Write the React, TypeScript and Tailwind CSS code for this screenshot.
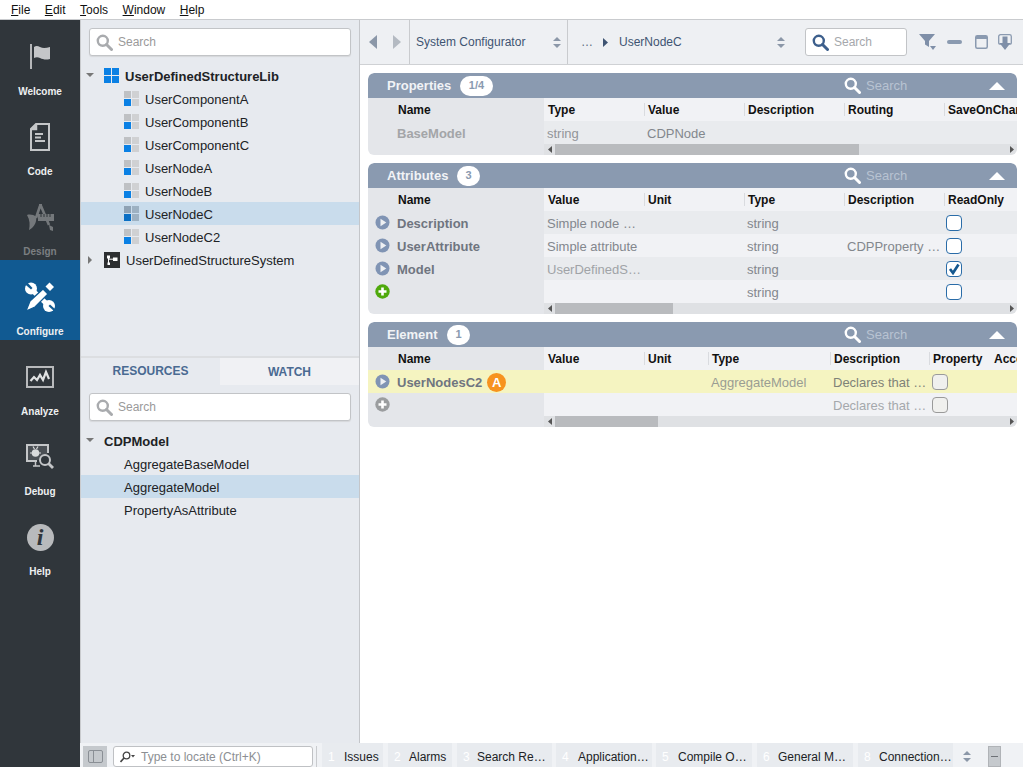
import React from "react";

const Mag = ({ c = "#a9abae", s = 17 }: { c?: string; s?: number }) => (
  <svg width={s} height={s} viewBox="0 0 17 17" className="shrink-0">
    <circle cx="6.8" cy="6.8" r="5" fill="none" stroke={c} strokeWidth="2.4" />
    <path d="M10.5 10.5L15.5 15.5" stroke={c} strokeWidth="3" strokeLinecap="round" />
  </svg>
);

const UpDown = ({ c = "#8b97a8" }: { c?: string }) => (
  <svg width="8" height="11" viewBox="0 0 8 11" className="shrink-0">
    <path d="M4 0L8 4H0z M0 7H8L4 11z" fill={c} />
  </svg>
);

const Tri = ({ dir, c = "#777" }: { dir: "down" | "right" | "left" | "up"; c?: string }) => {
  const p = { down: "M0 1H8L4 5z", right: "M2 0L6 4L2 8z", left: "M6 0L2 4L6 8z", up: "M0 5H8L4 1z" }[dir];
  return (
    <svg width="8" height="8" viewBox="0 0 8 8" className="shrink-0">
      <path d={p} fill={c} />
    </svg>
  );
};

const SearchBox = () => (
  <div className="mx-[8px] h-[28px] w-[262px] flex items-center gap-[5px] pl-[6px] bg-white border border-[#c2c4c7] rounded-[3px] shadow-[0_1px_1px_#d5d7da] text-[12px] text-[#9a9a9a]">
    <Mag />
    <span>Search</span>
  </div>
);

const NodeIcon = ({ sel }: { sel?: boolean }) => (
  <span className="grid grid-cols-2 gap-[1px] w-[15px] h-[15px] shrink-0">
    <span className={sel ? "bg-[#8fa2b4]" : "bg-[#bfc1c4]"} />
    <span className={sel ? "bg-[#9db1c2]" : "bg-[#d0d1d3]"} />
    <span className={sel ? "bg-[#0a6fc4]" : "bg-[#0a80e4]"} />
    <span className={sel ? "bg-[#9db1c2]" : "bg-[#cfd0d2]"} />
  </span>
);

const LibIcon = () => (
  <span className="grid grid-cols-2 gap-[1px] w-[15px] h-[15px] shrink-0">
    <span className="bg-[#0a80e4]" />
    <span className="bg-[#0a80e4]" />
    <span className="bg-[#0a80e4]" />
    <span className="bg-[#0a80e4]" />
  </span>
);

const SysIcon = () => (
  <svg width="16" height="16" viewBox="0 0 16 16" className="shrink-0">
    <rect width="16" height="16" fill="#2d2f31" />
    <rect x="3" y="3.5" width="3" height="3" fill="#fff" />
    <rect x="9" y="5.5" width="4.5" height="3.5" fill="#fff" />
    <rect x="3.5" y="10.5" width="2.5" height="2.5" fill="#fff" />
    <path d="M4.5 6V11M5 7.2H9" stroke="#fff" strokeWidth="1" />
  </svg>
);

const SideItem = ({
  label,
  children,
  active,
  dim,
}: {
  label: string;
  children: React.ReactNode;
  active?: boolean;
  dim?: boolean;
}) => (
  <div className={`h-[80px] flex flex-col items-center pt-[16px] ${active ? "bg-[#115a92]" : ""}`}>
    <div className="h-[42px] w-full flex items-center justify-center">{children}</div>
    <div className={`mt-[7px] text-[10px] leading-[14px] font-bold ${dim ? "text-[#7b7f82]" : "text-[#eef0f1]"}`}>{label}</div>
  </div>
);

const Sidebar = () => (
  <div className="w-[80px] shrink-0 bg-[#30363b] flex flex-col">
    <SideItem label="Welcome">
      <svg width="24" height="28" viewBox="0 0 24 28">
        <rect x="2" y="1" width="2" height="25" fill="#b5b7b9" />
        <path d="M6 4C8 2.500 10 3 12 4C15 5.500 18 5 22 4V16C18 17 15 16.500 12 15C10 14 8 14 6 15z" fill="#c4c6c8" />
      </svg>
    </SideItem>
    <SideItem label="Code">
      <svg width="20" height="28" viewBox="0 0 20 28">
        <path d="M6 1H19V27H1V6z" fill="none" stroke="#c4c6c8" strokeWidth="2" />
        <path d="M6.500 1V6.500H1" fill="#c4c6c8" stroke="#c4c6c8" strokeWidth="1.500" />
        <path d="M5 11H13M5 14.500H11M5 18H15" stroke="#c4c6c8" strokeWidth="1.800" />
      </svg>
    </SideItem>
    <SideItem label="Design" dim>
      <svg width="27" height="27" viewBox="0 0 27 27">
        <path d="M13 2L9 14M14 2L22 21" stroke="#74787b" strokeWidth="2.600" fill="none" />
        <path d="M12 0H15V4H12z" fill="#74787b" />
        <rect x="11" y="10" width="16" height="7" fill="#74787b" />
        <path d="M14 10V13M17 10V13M20 10V13M23 10V13" stroke="#30363b" strokeWidth="1" />
        <path d="M0 11C3 10 7 11 9 12.500C10 17 8 23 2 26C3 21 3 16 0 11z" fill="#74787b" />
        <path d="M22 21L26 23V27L23 26z" fill="#74787b" />
      </svg>
    </SideItem>
    <SideItem label="Configure" active>
      <svg width="30" height="30" viewBox="0 0 30 30">
        <path d="M6.500 7.500L24 24" stroke="#fff" strokeWidth="5" />
        <circle cx="6" cy="6.500" r="6" fill="#fff" />
        <path d="M1 -1L7.500 6L6 7.500L-1 1.500z" fill="#115a92" />
        <circle cx="24" cy="24" r="6" fill="#fff" />
        <path d="M30.500 30.500L23.500 24L25 22.500L31 28z" fill="#115a92" />
        <path d="M1 29L5 19L18 7L23 12L10 25z" fill="#fff" stroke="#115a92" strokeWidth="1.300" />
        <path d="M20.500 4.500L24.500 0.500L29 5L25 9z" fill="#fff" />
      </svg>
    </SideItem>
    <SideItem label="Analyze">
      <svg width="28" height="22" viewBox="0 0 28 22">
        <rect x="1" y="1" width="26" height="20" fill="#30363b" stroke="#b8babc" strokeWidth="2" />
        <path d="M4.500 15L8 11L11 14L14 9L17 14L20 6L23 13" fill="none" stroke="#e0e2e3" strokeWidth="2.200" />
      </svg>
    </SideItem>
    <SideItem label="Debug">
      <svg width="30" height="30" viewBox="0 0 30 30">
        <path d="M1 2H24V11H22V4H3V18H12V20H1z" fill="#c4c6c8" />
        <rect x="3" y="4" width="19" height="14" fill="#4b5055" />
        <path d="M8 24H15M10.500 20V24" stroke="#c4c6c8" strokeWidth="1.500" />
        <circle cx="10.500" cy="11" r="3.800" fill="#d8dadb" />
        <path d="M8 4.500L9.500 7M13 4.500L11.500 7M5 11H7M14 11H16" stroke="#d8dadb" strokeWidth="1.200" />
        <circle cx="20" cy="18" r="5" fill="#30363b" stroke="#c4c6c8" strokeWidth="2" />
        <path d="M23.500 21.500L28 26" stroke="#c4c6c8" strokeWidth="2.800" />
      </svg>
    </SideItem>
    <SideItem label="Help">
      <div className="w-[27px] h-[27px] rounded-full bg-[#b8babc] flex items-center justify-center font-['Liberation_Serif',serif] font-bold italic text-[24px] leading-none text-[#30363b]">
        i
      </div>
    </SideItem>
  </div>
);

const TreeRow = ({
  children,
  icon,
  sel,
  bold,
  indent,
}: {
  children: React.ReactNode;
  icon?: React.ReactNode;
  sel?: boolean;
  bold?: boolean;
  indent: string;
}) => (
  <div className={`h-[23px] flex items-center text-[13px] text-[#202225] ${indent} ${sel ? "bg-[#c9dcec]" : ""} ${bold ? "font-bold text-[#111]" : ""}`}>
    {icon}
    <span className="pt-[2px]">{children}</span>
  </div>
);

const LeftPanel = () => (
  <div className="w-[280px] shrink-0 bg-[#e7eaef] border-l border-[#c9cbce] border-r border-r-[#c4c6ca] flex flex-col">
    <div className="h-[338px] flex flex-col pt-[8px] border-b-2 border-[#dcdee1]">
      <SearchBox />
      <div className="mt-[8px]">
        <TreeRow
          bold
          indent="pl-[5px]"
          icon={
            <>
              <Tri dir="down" />
              <span className="ml-[10px] mr-[6px] flex">
                <LibIcon />
              </span>
            </>
          }
        >
          UserDefinedStructureLib
        </TreeRow>
        {["UserComponentA", "UserComponentB", "UserComponentC", "UserNodeA", "UserNodeB", "UserNodeC", "UserNodeC2"].map((n) => (
          <TreeRow
            key={n}
            indent="pl-[43px]"
            sel={n === "UserNodeC"}
            icon={
              <span className="mr-[6px] flex">
                <NodeIcon sel={n === "UserNodeC"} />
              </span>
            }
          >
            {n}
          </TreeRow>
        ))}
        <TreeRow
          indent="pl-[5px]"
          icon={
            <>
              <Tri dir="right" />
              <span className="ml-[10px] mr-[6px] flex">
                <SysIcon />
              </span>
            </>
          }
        >
          UserDefinedStructureSystem
        </TreeRow>
      </div>
    </div>
    <div className="flex-1 flex flex-col">
      <div className="h-[27px] flex text-[12px] font-bold text-[#4a6a92]">
        <div className="w-[139px] flex items-center justify-center pb-[2px]">RESOURCES</div>
        <div className="w-[139px] flex items-center justify-center bg-[#f0f1f4]">WATCH</div>
      </div>
      <div className="mt-[8px]">
        <SearchBox />
      </div>
      <div className="mt-[8px]">
        <TreeRow bold indent="pl-[5px]" icon={<Tri dir="down" />}>
          <span className="ml-[10px]">CDPModel</span>
        </TreeRow>
        <TreeRow indent="pl-[43px]">AggregateBaseModel</TreeRow>
        <TreeRow indent="pl-[43px]" sel>
          AggregateModel
        </TreeRow>
        <TreeRow indent="pl-[43px]">PropertyAsAttribute</TreeRow>
      </div>
    </div>
  </div>
);

const Toolbar = () => (
  <div className="h-[45px] shrink-0 bg-[#eef0f3] border-b border-[#cfd1d4] flex items-stretch text-[12px] text-[#3e5472]">
    <div className="w-[50px] flex items-center pl-[9px] gap-[16px] border-r border-[#c9cbce]">
      <svg width="8" height="14" viewBox="0 0 8 14"><path d="M8 0V14L0 7z" fill="#8b97a8" /></svg>
      <svg width="8" height="14" viewBox="0 0 8 14"><path d="M0 0V14L8 7z" fill="#b4bac2" /></svg>
    </div>
    <div className="w-[158px] flex items-center pl-[6px] border-r border-[#c9cbce]">
      <span className="w-[137px]">System Configurator</span>
      <UpDown />
    </div>
    <div className="w-[236px] flex items-center pl-[13px]">
      <span className="w-[22px] text-[#5b6b80]">…</span>
      <svg width="5" height="9" viewBox="0 0 5 9" className="mr-[11px]"><path d="M0 0V9L5 4.500z" fill="#3e5472" /></svg>
      <span className="w-[158px]">UserNodeC</span>
      <UpDown />
    </div>
    <div className="flex items-center">
      <div className="ml-[1px] w-[102px] h-[28px] bg-white border border-[#c2c4c7] rounded-[3px] flex items-center pl-[6px] gap-[5px] text-[#a5a8ac]">
        <Mag c="#3d5f8c" />
        <span>Search</span>
      </div>
      <svg width="17" height="17" viewBox="0 0 17 17" className="ml-[12px]">
        <path d="M0 0H16L10 7V13L6 10.500V7z" fill="#7f8fa8" />
        <path d="M11 12H17L14 16z" fill="#7f8fa8" />
      </svg>
      <span className="ml-[11px] w-[15px] h-[4px] rounded-[2px] bg-[#8a9ab0]" />
      <svg width="13" height="14" viewBox="0 0 13 14" className="ml-[13px]">
        <rect x="0.750" y="0.750" width="11.500" height="12.500" rx="1.500" fill="none" stroke="#8a9ab0" strokeWidth="1.500" />
        <rect x="1" y="1" width="11" height="3" fill="#8a9ab0" />
      </svg>
      <svg width="14" height="16" viewBox="0 0 14 16" className="ml-[10px]">
        <path d="M3 10H1.500C0.800 10 0.700 9.500 0.700 9V2.500C0.700 1.500 1.500 0.700 2.500 0.700H11.500C12.500 0.700 13.300 1.500 13.300 2.500V9C13.300 9.500 13.200 10 12.500 10H11" fill="none" stroke="#8a9ab0" strokeWidth="1.300" />
        <path d="M4.500 2.500H9.500V9H12.500L7 16L1.500 9H4.500z" fill="#7f8fa8" />
      </svg>
    </div>
  </div>
);

const Play = () => (
  <svg width="15" height="15" viewBox="0 0 15 15" className="shrink-0">
    <circle cx="7.500" cy="7.500" r="7" fill="#8094b4" />
    <path d="M5.500 3.800V11.200L11.300 7.500z" fill="#eef0f3" />
  </svg>
);

const Plus = ({ c }: { c: string }) => (
  <svg width="15" height="15" viewBox="0 0 15 15" className="shrink-0">
    <circle cx="7.500" cy="7.500" r="7.200" fill={c} />
    <path d="M7.500 3.500V11.500M3.500 7.500H11.500" stroke="#fff" strokeWidth="2.600" />
  </svg>
);

const Check = ({ on, gray }: { on?: boolean; gray?: boolean }) => (
  <span className={`mt-[1px] w-[16px] h-[16px] flex items-center justify-center rounded-[4px] border ${gray ? "border-[#9a9a9a] bg-[#f0f0ee]" : "-ml-[1px] border-[#2a6ca8] bg-white"}`}>
    {on && (
      <svg width="12" height="12" viewBox="0 0 12 12">
        <path d="M2 6L5 10L10.500 1.500" fill="none" stroke="#15588f" strokeWidth="2.700" />
      </svg>
    )}
  </span>
);

const PanelHead = ({ title, badge, badgeW, titleW }: { title: string; badge: string; badgeW: string; titleW: string }) => (
  <div className="h-[25px] bg-[#8a9ab0] rounded-t-[6px] flex items-center pl-[19px] text-[13px]">
    <span className={`font-bold text-[#f1f3f6] ${titleW}`}>{title}</span>
    <span className={`h-[20px] rounded-full bg-white flex items-center justify-center text-[11px] font-bold text-[#8a9ab0] ${badgeW}`}>{badge}</span>
    <span className="flex-1" />
    <Mag c="#fff" />
    <span className="ml-[5px] w-[123px] text-[#b8c3d2]">Search</span>
    <svg width="16" height="8" viewBox="0 0 16 8" className="mr-[12px]"><path d="M8 0L16 8H0z" fill="#fff" /></svg>
  </div>
);

const HeadRow = ({ cols }: { cols: [string, string][] }) => (
  <div className="h-[23px] flex text-[12px] font-bold text-[#111]">
    <div className="w-[176px] shrink-0 bg-[#e4e6ea] pl-[30px] flex items-center">Name</div>
    <div className="flex-1 min-w-0 overflow-hidden flex bg-[#f1f2f5]">
      {cols.map(([t, w], i) => (
        <div key={t} className={`${w} shrink-0 flex items-center`}>
          {i > 0 && <span className="w-px h-[13px] bg-[#d9dbdf]" />}
          <span className={`whitespace-nowrap ${i > 0 ? "ml-[3px]" : "ml-[4px]"}`}>{t}</span>
        </div>
      ))}
    </div>
  </div>
);

const Row = ({
  name,
  icon,
  cols,
  alt,
  hl,
}: {
  name?: React.ReactNode;
  icon?: React.ReactNode;
  cols: [React.ReactNode, string, string?][];
  alt?: boolean;
  hl?: boolean;
}) => (
  <div className={`h-[23px] flex text-[13px] ${hl ? "bg-[#f5f4c1]" : ""}`}>
    <div className={`w-[176px] shrink-0 flex items-center ${hl ? "" : "bg-[#e4e6ea]"}`}>
      <span className="w-[29px] pl-[7px] flex">{icon}</span>
      {name}
    </div>
    <div className={`flex-1 min-w-0 overflow-hidden flex ${hl ? "" : alt ? "bg-[#f1f2f5]" : "bg-[#e9ebee]"}`}>
      {cols.map(([c, w, tc], i) => (
        <div key={i} className={`${w} shrink-0 flex items-center pl-[3px] whitespace-nowrap ${tc ?? "text-[#83878d]"}`}>
          {typeof c === "string" ? <span className="pt-[2px]">{c}</span> : c}
        </div>
      ))}
    </div>
  </div>
);

const ScrollBar = ({ thumb }: { thumb: string }) => (
  <div className="h-[11px] flex">
    <div className="w-[176px] shrink-0 bg-[#e4e6ea]" />
    <div className="flex-1 bg-[#dfe1e4] flex items-center">
      <span className="w-[11px] flex justify-center"><svg width="4" height="7" viewBox="0 0 4 7"><path d="M4 0V7L0 3.500z" fill="#555" /></svg></span>
      <span className={`h-[11px] bg-[#b9bbbe] ${thumb}`} />
      <span className="flex-1" />
      <span className="w-[11px] flex justify-center"><svg width="4" height="7" viewBox="0 0 4 7"><path d="M0 0V7L4 3.500z" fill="#555" /></svg></span>
    </div>
  </div>
);

const C = "w-[100px]";
const nameCls = "pt-[2px] font-bold text-[#6f7580]";

const Main = () => (
  <div className="flex-1 min-w-0 bg-white flex flex-col">
    <Toolbar />
    <div className="pl-[8px] pr-[6px] pt-[8px] flex flex-col gap-[8px]">
      <section className="rounded-[6px] overflow-hidden">
        <PanelHead title="Properties" badge="1/4" badgeW="w-[33px]" titleW="w-[73px]" />
        <HeadRow cols={[["Type", C], ["Value", C], ["Description", C], ["Routing", C], ["SaveOnChange", "w-[100px]"]]} />
        <Row
          name={<span className="pt-[2px] font-bold text-[#a3a5a8]">BaseModel</span>}
          cols={[["string", C, "text-[#929599]"], ["CDPNode", C, "text-[#83878d]"]]}
        />
        <ScrollBar thumb="w-[304px]" />
      </section>

      <section className="rounded-[6px] overflow-hidden">
        <PanelHead title="Attributes" badge="3" badgeW="w-[23px]" titleW="w-[70px]" />
        <HeadRow cols={[["Value", C], ["Unit", C], ["Type", C], ["Description", C], ["ReadOnly", C]]} />
        <Row
          icon={<Play />}
          name={<span className={nameCls}>Description</span>}
          cols={[["Simple node …", C], ["", C], ["string", C], ["", C], [<Check />, C]]}
        />
        <Row
          alt
          icon={<Play />}
          name={<span className={nameCls}>UserAttribute</span>}
          cols={[["Simple attribute", C], ["", C], ["string", C], ["CDPProperty …", C], [<Check />, C]]}
        />
        <Row
          icon={<Play />}
          name={<span className={nameCls}>Model</span>}
          cols={[["UserDefinedS…", C, "text-[#a0a3a7]"], ["", C], ["string", C], ["", C], [<Check on />, C]]}
        />
        <Row
          alt
          icon={<Plus c="#4fa90c" />}
          cols={[["", C], ["", C], ["string", C], ["", C], [<Check />, C]]}
        />
        <ScrollBar thumb="w-[118px]" />
      </section>

      <section className="rounded-[6px] overflow-hidden">
        <PanelHead title="Element" badge="1" badgeW="w-[23px]" titleW="w-[60px]" />
        <HeadRow cols={[["Value", C], ["Unit", "w-[64px]"], ["Type", "w-[122px]"], ["Description", "w-[99px]"], ["Property", "w-[62px]"], ["Access", "w-[40px]"]]} />
        <Row
          hl
          icon={<Play />}
          name={
            <span className="flex items-center">
              <span className={nameCls}>UserNodesC2</span>
              <span className="ml-[5px] mt-[2px] w-[19px] h-[19px] rounded-full bg-[#f7931e] text-white font-bold text-[13px] flex items-center justify-center">A</span>
            </span>
          }
          cols={[
            ["", C],
            ["", "w-[64px]"],
            ["AggregateModel", "w-[122px]", "text-[#9a9d93]"],
            ["Declares that …", "w-[99px]", "text-[#7f8278]"],
            [<Check gray />, "w-[62px]"],
          ]}
        />
        <Row
          alt
          icon={<Plus c="#9b9d9f" />}
          cols={[
            ["", C],
            ["", "w-[64px]"],
            ["", "w-[122px]"],
            ["Declares that …", "w-[99px]", "text-[#a5a8ac]"],
            [<Check gray />, "w-[62px]"],
          ]}
        />
        <ScrollBar thumb="w-[103px]" />
      </section>
    </div>
  </div>
);

const tabs: [string, string, string, string, string][] = [
  ["1", "Issues", "w-[61px]", "", "w-[16px]"],
  ["2", "Alarms", "w-[64px]", "ml-[5px]", "w-[15px]"],
  ["3", "Search Re…", "w-[95px]", "ml-[5px]", "w-[14px]"],
  ["4", "Application…", "w-[96px]", "ml-[4px]", "w-[16px]"],
  ["5", "Compile O…", "w-[96px]", "ml-[4px]", "w-[16px]"],
  ["6", "General M…", "w-[96px]", "ml-[5px]", "w-[15px]"],
  ["8", "Connection…", "w-[95px]", "ml-[5px]", "w-[15px]"],
];

const StatusBar = () => (
  <div className="h-[24px] shrink-0 bg-[#f0f2f5] flex items-start text-[12px] text-[#202225]">
    <div className="mt-[3px] ml-[3px] w-[24px] h-[21px] bg-[#c5c9cd] flex items-center justify-center">
      <span className="w-[15px] h-[13px] border border-[#8a8f95] rounded-[2px] flex">
        <span className="w-[5px] border-r border-[#8a8f95]" />
      </span>
    </div>
    <div className="mt-[3px] ml-[6px] w-[200px] h-[21px] bg-white border border-[#bfc1c4] rounded-[3px] flex items-center pl-[6px] text-[#8c8f93]">
      <svg width="15" height="12" viewBox="0 0 15 12" className="mr-[6px]">
        <circle cx="6.500" cy="4.500" r="3.300" fill="none" stroke="#444" strokeWidth="1.300" />
        <path d="M4 7L0.500 11" stroke="#444" strokeWidth="1.600" />
        <path d="M11 4H15L13 6.500z" fill="#444" />
      </svg>
      Type to locate (Ctrl+K)
    </div>
    <span className="mt-[3px] ml-[3px] w-px h-[21px] bg-[#c9cbce]" />
    <span className="w-[5px]" />
    {tabs.map(([n, l, w, m, nw]) => (
      <div key={n} className={`${w} ${m} h-[24px] pt-[3px] bg-[#e8ebef] flex items-center pl-[6px] whitespace-nowrap`}>
        <span className={`${nw} text-white`}>{n}</span>
        {l}
      </div>
    ))}
    <div className="ml-[10px] h-[24px] pt-[3px] flex items-center"><UpDown /></div>
    <div className="ml-[17px] mt-[3px] w-[13px] h-[21px] bg-[#c5c9cd] border border-[#b0b3b7] flex items-center justify-center">
      <span className="w-[7px] h-px bg-[#6d7176]" />
    </div>
  </div>
);

export default function App() {
  return (
    <div className="w-[1023px] h-[767px] overflow-hidden flex flex-col font-['Liberation_Sans',sans-serif] bg-white">
      <div className="h-[20px] shrink-0 bg-white border-b border-[#c9cbce] flex items-center pl-[11px] gap-[14.5px] text-[12px] text-[#111]">
        {[["F", "ile"], ["E", "dit"], ["T", "ools"], ["W", "indow"], ["H", "elp"]].map(([a, b]) => (
          <span key={a}>
            <span className="underline">{a}</span>
            {b}
          </span>
        ))}
      </div>
      <div className="flex-1 min-h-0 flex">
        <Sidebar />
        <div className="flex-1 min-w-0 flex flex-col">
          <div className="flex-1 min-h-0 flex">
            <LeftPanel />
            <Main />
          </div>
          <StatusBar />
        </div>
      </div>
    </div>
  );
}
